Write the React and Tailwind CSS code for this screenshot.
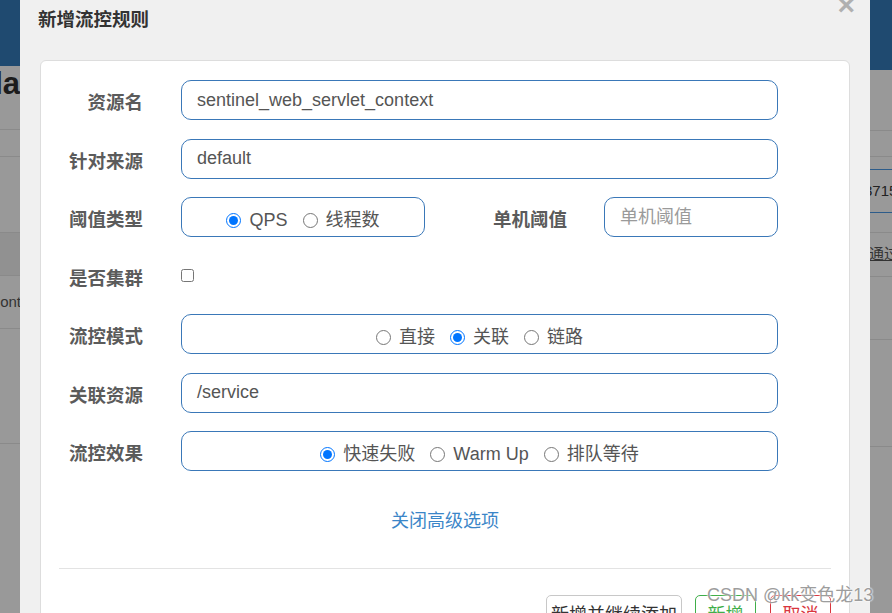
const font = { fontFamily: '"Liberation Sans", "Noto Sans CJK SC", sans-serif' }

function Radio({ label, checked, name }) {
  return (
    <label className="flex items-center gap-[8px]">
      <input type="radio" name={name} defaultChecked={checked} className="m-0 h-[15px] w-[15px]" />
      <span>{label}</span>
    </label>
  )
}

function Row({ label, children }) {
  return (
    <div className="flex h-[40px] items-center">
      <div className="w-[84px] text-right text-[18.5px] font-bold leading-none text-[#5b5b5b] pt-[7px]">{label}</div>
      <div className="ml-[38px] flex w-[597px] items-center">{children}</div>
    </div>
  )
}

function TextBox({ value, placeholder, className = '' }) {
  return (
    <div className={`flex h-[40px] items-center rounded-[10px] border border-[#3a78b8] bg-white px-[15px] text-[18px] ${className}`}>
      {value ? <span className="text-[#555]">{value}</span> : <span className="text-[#9a9a9a]">{placeholder}</span>}
    </div>
  )
}

function RadioBox({ name, items, className = '' }) {
  return (
    <div className={`flex h-[40px] items-center justify-center gap-[15px] rounded-[10px] border border-[#3a78b8] bg-white pt-[6px] text-[18px] text-[#555] ${className}`}>
      {items.map((it) => (
        <Radio key={it.label} name={name} label={it.label} checked={it.checked} />
      ))}
    </div>
  )
}

function LeftStrip() {
  return (
    <div className="flex w-[20px] shrink-0 flex-col overflow-hidden bg-[#999]">
      <div className="h-[66px] shrink-0 bg-[#1f4a70]" />
      <div className="flex h-[64px] shrink-0 justify-end border-b border-[#8a8a8a] text-[31px] font-bold leading-[36px] text-[#1c1c1c]">
        <span className="whitespace-nowrap">la</span>
      </div>
      <div className="h-[27px] shrink-0 border-b border-[#8a8a8a]" />
      <div className="h-[75px] shrink-0" />
      <div className="h-[44px] shrink-0 border-y border-[#8a8a8a] bg-[#919191]" />
      <div className="flex h-[53px] shrink-0 items-center justify-end border-b border-[#8a8a8a] text-[15px] text-[#333]">
        <span className="-mr-[1px]">ont</span>
      </div>
      <div className="h-[115px] shrink-0 border-b border-[#8a8a8a]" />
      <div className="flex-1" />
    </div>
  )
}

function RightStrip() {
  return (
    <div className="flex w-[22px] shrink-0 flex-col overflow-hidden bg-[#999]">
      <div className="h-[70px] shrink-0 bg-[#1f4a70]" />
      <div className="h-[61px] shrink-0 border-b border-[#8a8a8a]" />
      <div className="h-[26px] shrink-0 border-b border-[#8a8a8a]" />
      <div className="h-[13px] shrink-0 border-b border-[#2d5c8a]" />
      <div className="flex h-[43px] shrink-0 items-center border-b border-[#2d5c8a] text-[15px] text-[#222]">
        <span className="-ml-[6px] whitespace-nowrap">3715</span>
      </div>
      <div className="h-[20px] shrink-0 border-b border-[#8a8a8a]" />
      <div className="flex h-[44px] shrink-0 items-center border-b border-[#8a8a8a] text-[15px] text-[#333]">
        <span className="-ml-[1px] whitespace-nowrap underline">通过</span>
      </div>
      <div className="h-[63px] shrink-0 border-b border-[#8a8a8a]" />
      <div className="h-[107px] shrink-0 border-b border-[#8a8a8a]" />
      <div className="flex-1" />
    </div>
  )
}

export default function App() {
  return (
    <div className="relative flex h-[613px] w-[892px] overflow-hidden bg-[#999]" style={font}>
      <LeftStrip />

      <div className="flex w-[850px] shrink-0 flex-col bg-[#f0f0f0]">
        <div className="flex h-[40px] shrink-0 items-center justify-between pl-[18px] pr-[15px]">
          <h1 className="text-[18.5px] font-bold text-[#333]">新增流控规则</h1>
          <span className="-mt-[30px] text-[30px] font-bold leading-none text-[#b0b0b0]">×</span>
        </div>

        <div className="shrink-0 px-[20px] pt-[20px]">
          <div className="rounded-[6px] border border-[#ddd] bg-white px-[18px] pt-[19px] pb-[40px]">
            <div className="flex flex-col gap-[18.5px]">
              <Row label="资源名">
                <TextBox value="sentinel_web_servlet_context" className="w-full" />
              </Row>
              <Row label="针对来源">
                <TextBox value="default" className="w-full" />
              </Row>
              <Row label="阈值类型">
                <RadioBox
                  name="grade"
                  className="w-[244px]"
                  items={[{ label: 'QPS', checked: true }, { label: '线程数' }]}
                />
                <div className="w-[142px] text-right text-[18.5px] font-bold leading-none text-[#5b5b5b] pt-[7px]">单机阈值</div>
                <TextBox placeholder="单机阈值" className="ml-[37px] w-[174px]" />
              </Row>
              <Row label="是否集群">
                <input type="checkbox" className="m-0 h-[13px] w-[13px]" />
              </Row>
              <Row label="流控模式">
                <RadioBox
                  name="strategy"
                  className="w-full"
                  items={[{ label: '直接' }, { label: '关联', checked: true }, { label: '链路' }]}
                />
              </Row>
              <Row label="关联资源">
                <TextBox value="/service" className="w-full" />
              </Row>
              <Row label="流控效果">
                <RadioBox
                  name="behavior"
                  className="w-full"
                  items={[{ label: '快速失败', checked: true }, { label: 'Warm Up' }, { label: '排队等待' }]}
                />
              </Row>
            </div>

            <div className="mt-[38px] text-center text-[18px] leading-[25px] text-[#3b86c8]">关闭高级选项</div>

            <div className="mt-[34px] border-t border-[#e3e3e3]" />

            <div className="mt-[26px] flex justify-end gap-[13px] text-[18px]">
              <button className="h-[40px] w-[136px] rounded-[5px] border border-[#c8c8c8] bg-white text-[#333]">新增并继续添加</button>
              <button className="h-[40px] w-[61px] rounded-[5px] border border-[#3fae49] bg-white text-[#3fae49]">新增</button>
              <button className="ml-[1px] h-[40px] w-[61px] rounded-[5px] border border-[#d9363e] bg-white text-[#d9363e]">取消</button>
            </div>
          </div>
        </div>
      </div>

      <RightStrip />

      <div
        className="absolute left-[707px] top-[582px] whitespace-nowrap text-[18px] text-[#9d9d9d]"
        style={{ textShadow: '0 0 2px #fff, 0 0 2px #fff' }}
      >
        CSDN @kk变色龙13
      </div>
    </div>
  )
}
